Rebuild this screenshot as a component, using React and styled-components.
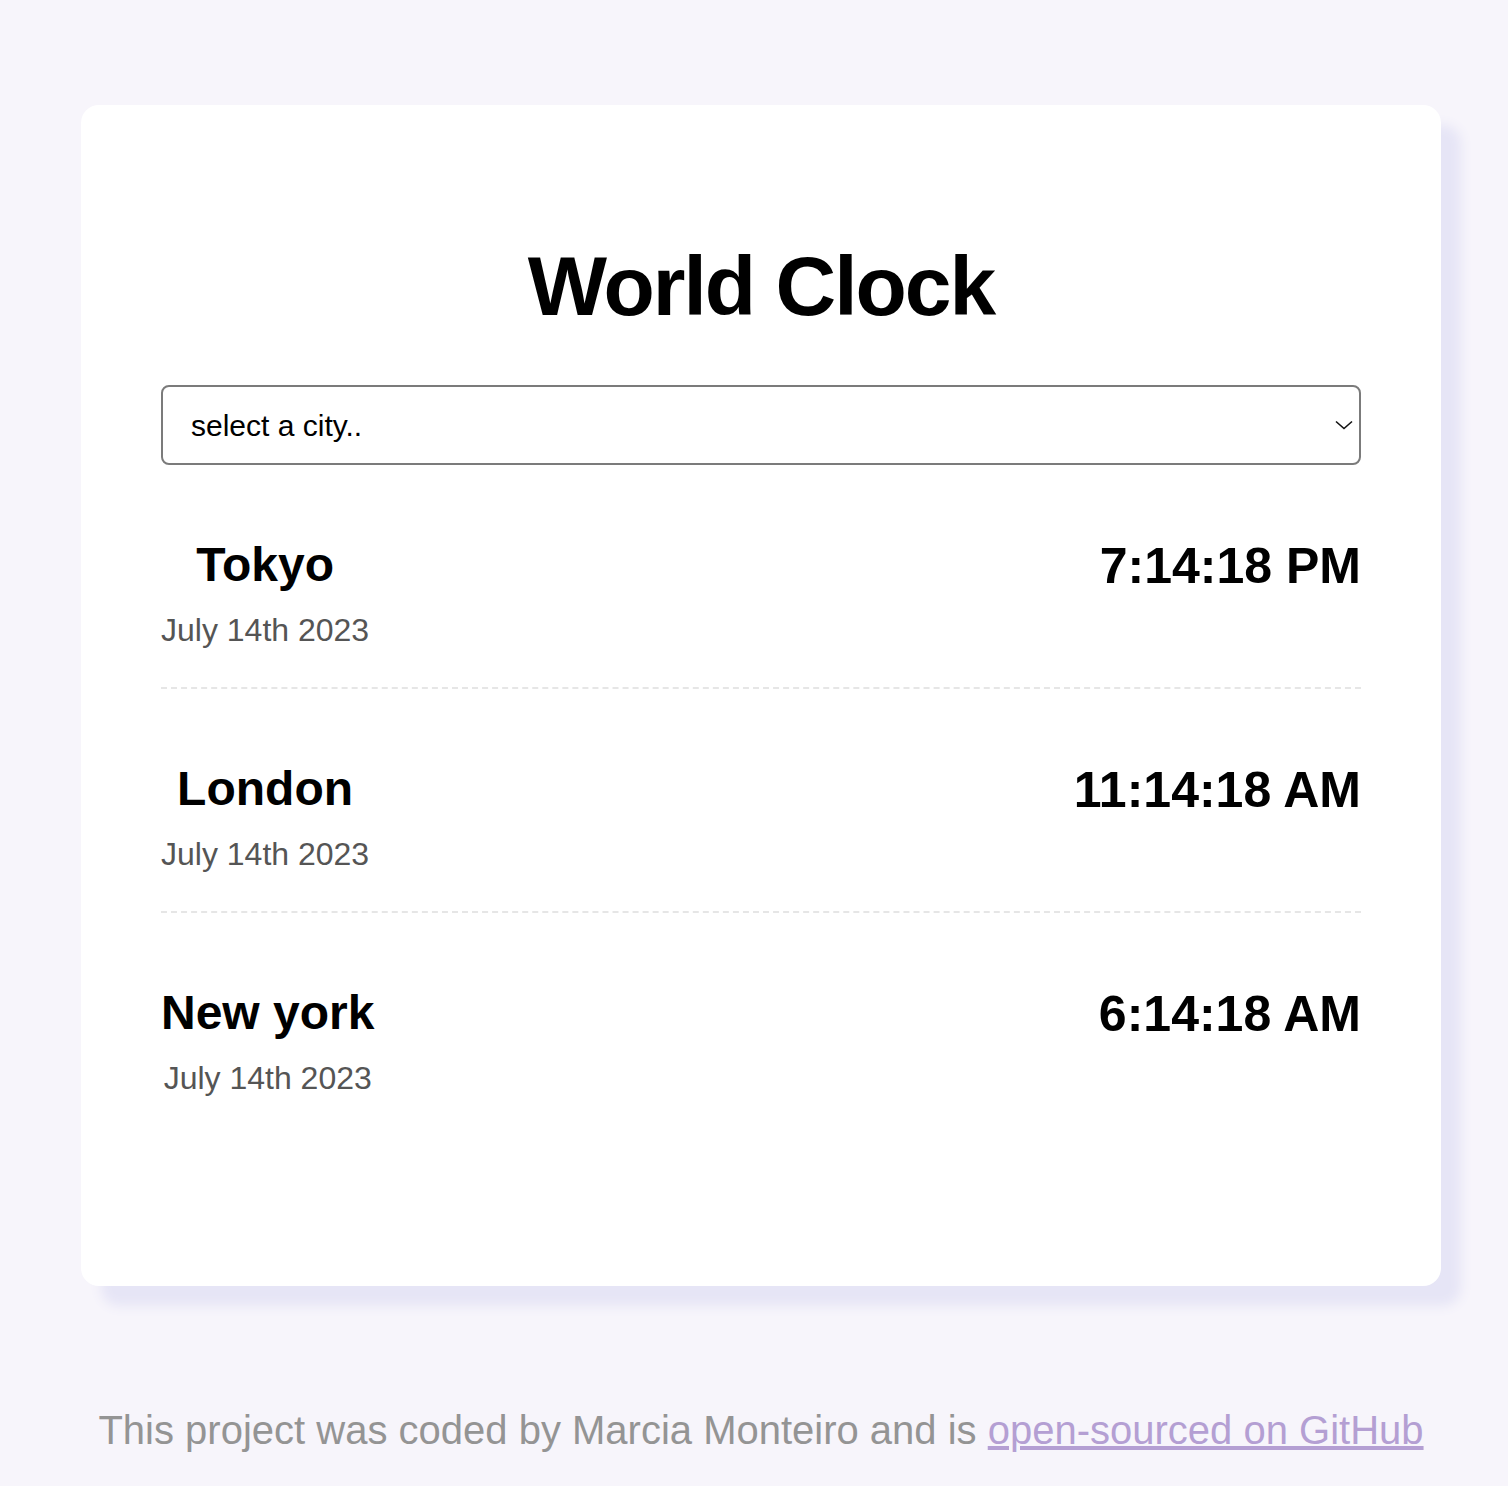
import React from 'react'
import styled, { createGlobalStyle } from 'styled-components'

const cities = [
  { name: 'Tokyo', date: 'July 14th 2023', time: '7:14:18 PM' },
  { name: 'London', date: 'July 14th 2023', time: '11:14:18 AM' },
  { name: 'New york', date: 'July 14th 2023', time: '6:14:18 AM' },
]

function App() {
  return (
    <>
      <GlobalStyle />
      <Page>
        <Card>
          <Title>World Clock</Title>
          <SelectWrap>
            <CitySelect defaultValue="">
              <option value="">select a city..</option>
              <option value="paris">Paris</option>
              <option value="sydney">Sydney</option>
            </CitySelect>
            <Chevron viewBox="0 0 18 10" width="18" height="10">
              <path d="M1 1.5 L9 8.5 L17 1.5" fill="none" stroke="#111" strokeWidth="1.6" />
            </Chevron>
          </SelectWrap>
          <List>
            {cities.map((c) => (
              <Row key={c.name}>
                <Place>
                  <CityName>{c.name}</CityName>
                  <CityDate>{c.date}</CityDate>
                </Place>
                <Time>{c.time}</Time>
              </Row>
            ))}
          </List>
        </Card>
        <Footer>
          This project was coded by Marcia Monteiro and is{' '}
          <a href="#">open-sourced on GitHub</a>
        </Footer>
      </Page>
    </>
  )
}

export default App

const GlobalStyle = createGlobalStyle`
  body {
    margin: 0;
    background: #f7f5fb;
    font-family: "Liberation Sans", Arial, sans-serif;
  }
`

const Page = styled.div`
  padding: 105px 67px 40px 81px;
  display: flex;
  flex-direction: column;
`

const Card = styled.div`
  background: #fff;
  border-radius: 18px;
  box-shadow: 20px 20px 12px #e6e5f6;
  padding: 133px 80px 151px;
`

const Title = styled.h1`
  margin: 0 0 50px;
  text-align: center;
  font-size: 84px;
  line-height: normal;
  font-weight: 700;
  letter-spacing: -2px;
  color: #000;
`

const SelectWrap = styled.div`
  position: relative;
`

const CitySelect = styled.select`
  appearance: none;
  width: 100%;
  height: 80px;
  box-sizing: border-box;
  border: 2px solid #7b7b7b;
  border-radius: 8px;
  background: #fff;
  padding: 0 28px;
  font-family: "Liberation Sans", Arial, sans-serif;
  font-size: 30px;
  color: #000;
  outline: none;
`

const Chevron = styled.svg`
  position: absolute;
  right: 8px;
  top: 35px;
  pointer-events: none;
`

const List = styled.div`
  display: flex;
  flex-direction: column;
`

const Row = styled.div`
  display: flex;
  justify-content: space-between;
  align-items: flex-start;
  padding: 72px 0 38px;
  border-bottom: 2px dashed #e6e6e6;

  &:last-child {
    border-bottom: none;
  }
`

const Place = styled.div`
  display: flex;
  flex-direction: column;
  align-items: center;
  gap: 20px;
`

const CityName = styled.div`
  font-size: 48px;
  font-weight: 700;
  color: #000;
`

const CityDate = styled.div`
  font-size: 32px;
  color: #555;
`

const Time = styled.div`
  font-size: 50px;
  font-weight: 700;
  color: #000;
`

const Footer = styled.footer`
  margin-top: 122px;
  text-align: center;
  font-size: 40px;
  color: #949494;

  a {
    color: #b49fd3;
  }
`
